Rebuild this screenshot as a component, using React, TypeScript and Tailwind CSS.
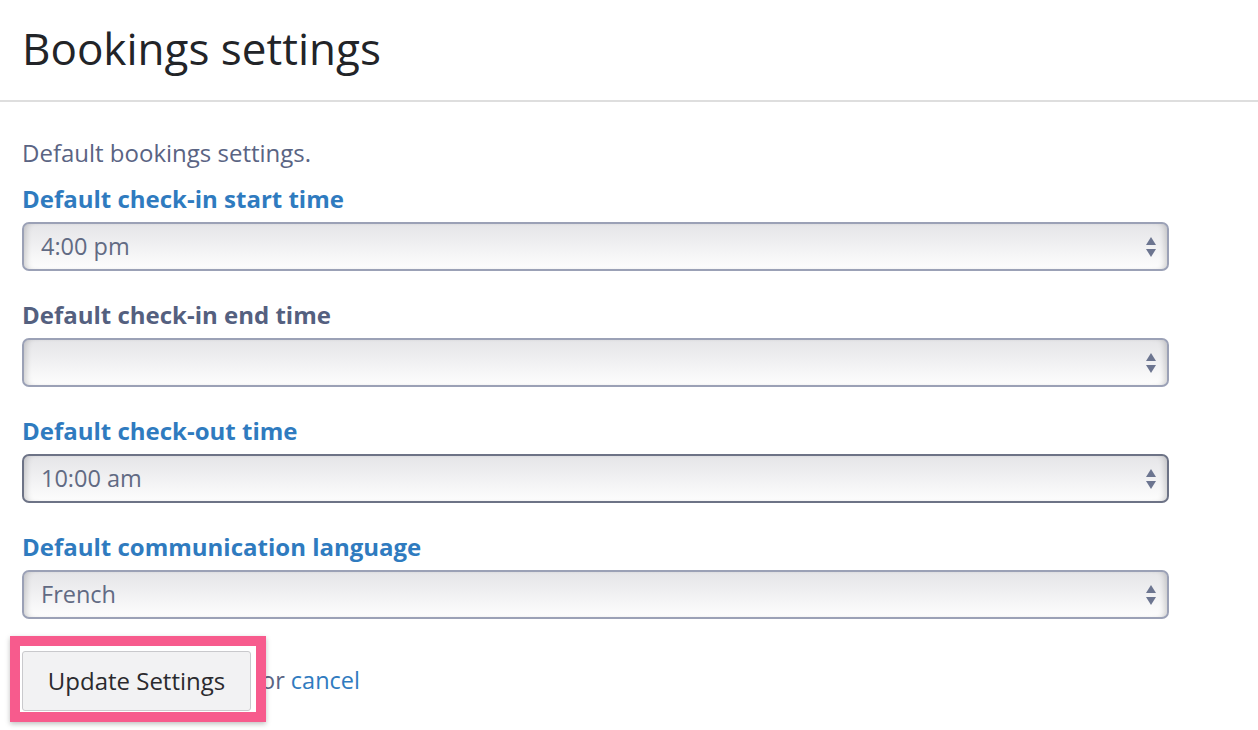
import React from "react";

function Arrows({ color }: { color: string }) {
  return (
    <svg width="12" height="22" viewBox="0 0 12 22" className="shrink-0">
      <polygon points="6,1 11,9 1,9" fill={color} />
      <polygon points="1,13 11,13 6,21" fill={color} />
    </svg>
  );
}

function Select({ value, dark }: { value: string; dark?: boolean }) {
  return (
    <div
      className={
        "flex h-[49px] w-[1147px] items-center justify-between rounded-[7px] border-2 pl-[17px] pr-[10px] bg-gradient-to-b from-[#e5e5e8] to-[#fdfdfd] shadow-[inset_6px_0_6px_-4px_rgba(0,0,0,0.18),inset_-6px_0_6px_-4px_rgba(0,0,0,0.18)] " +
        (dark ? "border-[#6d7386]" : "border-[#9ba1b6]")
      }
    >
      <span className="text-[23.5px] leading-none text-[#616a83]">{value}</span>
      <Arrows color="#6c7590" />
    </div>
  );
}

function Field({
  label,
  value,
  blue,
  dark,
}: {
  label: string;
  value: string;
  blue?: boolean;
  dark?: boolean;
}) {
  return (
    <div className="flex flex-col">
      <div
        className={
          "text-[24px] font-bold leading-[30px] " +
          (blue ? "text-[#2f7bbf]" : "text-[#54607f]")
        }
      >
        {label}
      </div>
      <div className="mt-[8px]">
        <Select value={value} dark={dark} />
      </div>
    </div>
  );
}

export default function App() {
  return (
    <div
      className="relative h-[730px] w-[1258px] overflow-hidden bg-white"
      style={{ fontFamily: '"Open Sans", "Noto Sans", sans-serif' }}
    >
      <div className="h-[102px] border-b-2 border-[#dedede] px-[22px] pt-[20px]">
        <h1 className="text-[44px] font-normal leading-[56px] text-[#222428]">
          Bookings settings
        </h1>
      </div>
      <div className="px-[22px] pt-[36px]">
        <p className="text-[24px] leading-[30px] text-[#5a6483]">
          Default bookings settings.
        </p>
        <div className="mt-[16px] flex flex-col gap-[29px]">
          <Field label="Default check-in start time" value="4:00 pm" blue />
          <Field label="Default check-in end time" value="" />
          <Field label="Default check-out time" value="10:00 am" blue dark />
          <Field label="Default communication language" value="French" blue />
        </div>
        <div className="mt-[32px] flex items-center gap-[10px]">
          <button className="h-[60px] w-[229px] rounded-[3px] border border-[#c9c9cc] bg-[#f2f2f3] text-[24px] text-[#2a2a2e]">
            Update Settings
          </button>
          <span className="text-[23.5px] text-[#5a6483]">
            or <span className="text-[#2f7bbf]">cancel</span>
          </span>
        </div>
      </div>
      <div className="absolute left-[10px] top-[636px] h-[86px] w-[256px] border-[10px] border-[#f75b8d] shadow-[0_2px_5px_rgba(0,0,0,0.25)]" />
    </div>
  );
}
